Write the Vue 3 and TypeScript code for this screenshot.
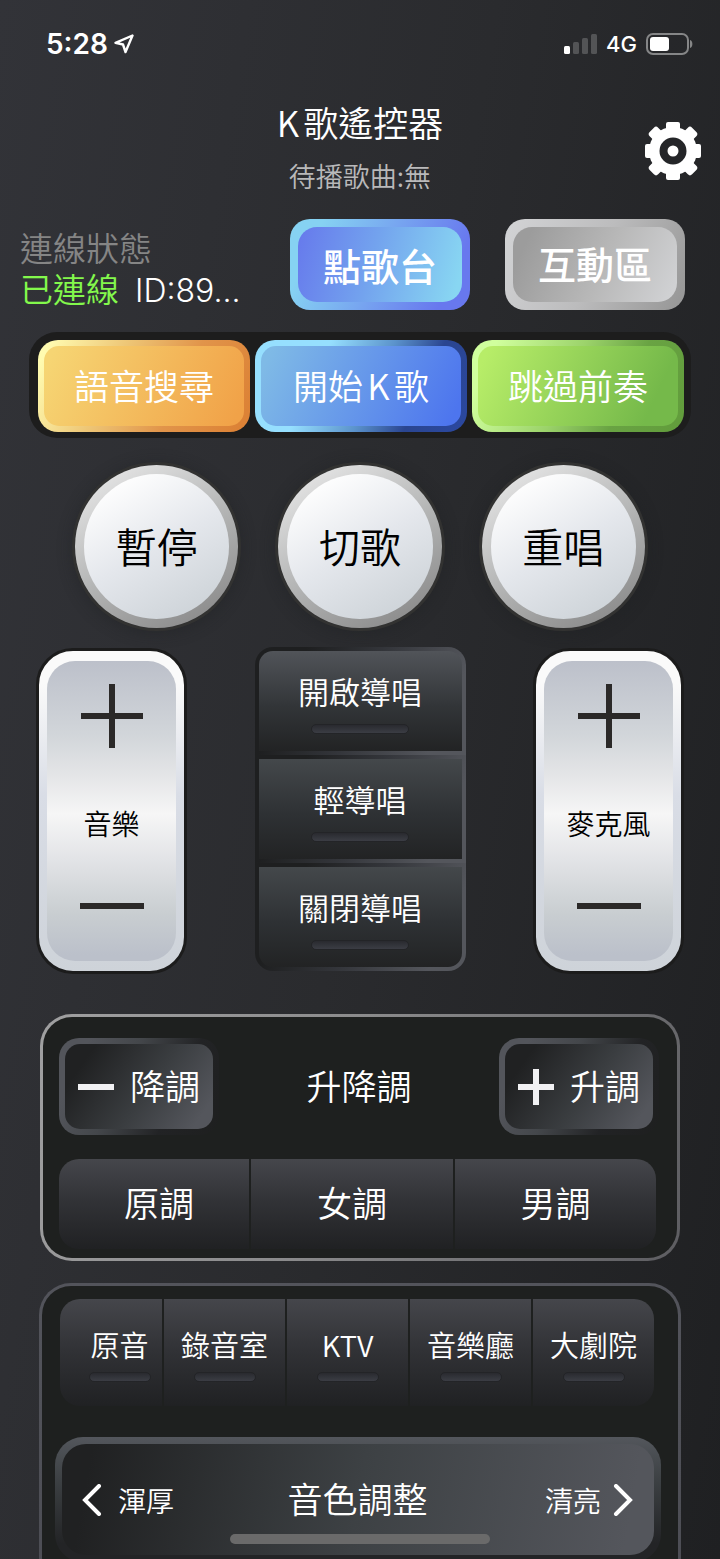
<script setup lang="ts">
import { ref } from 'vue'

interface Action {
  label: string
  tone: string
}

const searchActions: Action[] = [
  { label: '語音搜尋', tone: 'orange' },
  { label: '開始K歌', tone: 'blue' },
  { label: '跳過前奏', tone: 'green' },
]
const playback: string[] = ['暫停', '切歌', '重唱']
const guides: string[] = ['開啟導唱', '輕導唱', '關閉導唱']
const keys: string[] = ['原調', '女調', '男調']
const effects: string[] = ['原音', '錄音室', 'KTV', '音樂廳', '大劇院']

const connected = ref(true)
const roomId = ref('ID:89...')
</script>

<template>
  <div class="remote">
    <div class="statusbar">
      <div class="clock">
        <span>5:28</span>
        <svg width="20" height="20" viewBox="0 0 20 20" aria-hidden="true">
          <path d="M18.500 1.500 1.500 8.800 9 10.500 11.500 18Z" fill="none" stroke="#fff" stroke-width="2.400" stroke-linejoin="round" />
        </svg>
      </div>
      <div class="network">
        <svg width="33" height="20" viewBox="0 0 33 20" aria-hidden="true">
          <rect x="0" y="12" width="6" height="8" rx="1.500" fill="#fff" />
          <rect x="9" y="8" width="6" height="12" rx="1.500" fill="#535456" />
          <rect x="18" y="4" width="6" height="16" rx="1.500" fill="#535456" />
          <rect x="27" y="0" width="6" height="20" rx="1.500" fill="#535456" />
        </svg>
        <span>4G</span>
        <svg width="47" height="22" viewBox="0 0 47 22" aria-hidden="true">
          <rect x="1" y="1" width="41" height="20" rx="6" fill="none" stroke="#858687" stroke-width="2" />
          <rect x="4" y="4" width="19" height="14" rx="3" fill="#fff" />
          <path d="M44 7c3.200 1 3.200 7 0 8Z" fill="#858687" />
        </svg>
      </div>
    </div>

    <header class="header">
      <div class="titles">
        <h1>K歌遙控器</h1>
        <p>待播歌曲:無</p>
      </div>
      <button class="settings" type="button" aria-label="設定">
        <svg width="56" height="58" viewBox="-28 -29 56 58" aria-hidden="true">
          <g fill="#fff">
            <circle r="24" />
            <rect x="-7" y="-29" width="14" height="58" rx="2" />
            <rect x="-28" y="-7" width="56" height="14" rx="2" />
            <rect x="-6" y="-30" width="12" height="60" rx="3" transform="rotate(45)" />
            <rect x="-6" y="-30" width="12" height="60" rx="3" transform="rotate(-45)" />
          </g>
          <circle r="9.500" fill="none" stroke="#242528" stroke-width="8" />
        </svg>
      </button>
    </header>

    <section class="connection">
      <div class="state">
        <p class="state-label">連線狀態</p>
        <p class="state-value">
          <span class="online">{{ connected ? '已連線' : '未連線' }}</span>
          <span class="room">{{ roomId }}</span>
        </p>
      </div>
      <button class="bevel songs" type="button"><span class="face">點歌台</span></button>
      <button class="bevel interact" type="button"><span class="face">互動區</span></button>
    </section>

    <section class="actions">
      <button v-for="a in searchActions" :key="a.label" class="bevel action" :class="a.tone" type="button">
        <span class="face">{{ a.label }}</span>
      </button>
    </section>

    <section class="playback">
      <button v-for="p in playback" :key="p" class="round" type="button">
        <span class="face">{{ p }}</span>
      </button>
    </section>

    <section class="mixer">
      <div class="volume" role="group" aria-label="音樂">
        <div class="volume-face">
          <button type="button" aria-label="音樂 +">
            <svg width="66" height="66" viewBox="0 0 66 66"><path d="M2 33H64M33 1V65" stroke="#2b2928" stroke-width="6" /></svg>
          </button>
          <span>音樂</span>
          <button type="button" aria-label="音樂 −">
            <svg width="66" height="6" viewBox="0 0 66 6"><path d="M1 3H65" stroke="#2b2928" stroke-width="6" /></svg>
          </button>
        </div>
      </div>
      <div class="guides">
        <button v-for="g in guides" :key="g" class="guide" type="button">
          <span class="guide-face">
            <span>{{ g }}</span>
            <i class="lamp wide"></i>
          </span>
        </button>
      </div>
      <div class="volume" role="group" aria-label="麥克風">
        <div class="volume-face">
          <button type="button" aria-label="麥克風 +">
            <svg width="66" height="66" viewBox="0 0 66 66"><path d="M2 33H64M33 1V65" stroke="#2b2928" stroke-width="6" /></svg>
          </button>
          <span>麥克風</span>
          <button type="button" aria-label="麥克風 −">
            <svg width="66" height="6" viewBox="0 0 66 6"><path d="M1 3H65" stroke="#2b2928" stroke-width="6" /></svg>
          </button>
        </div>
      </div>
    </section>

    <section class="panel pitch">
      <div class="pitch-row">
        <button class="bevel step" type="button">
          <span class="face">
            <svg width="36" height="36" viewBox="0 0 36 36" aria-hidden="true"><path d="M0 18H36" stroke="#f1f1f3" stroke-width="6" /></svg>
            <span class="caption">降調</span>
          </span>
        </button>
        <h2 class="caption">升降調</h2>
        <button class="bevel step" type="button">
          <span class="face">
            <svg width="36" height="36" viewBox="0 0 36 36" aria-hidden="true"><path d="M0 18H36M18 0V36" stroke="#f1f1f3" stroke-width="6" /></svg>
            <span class="caption">升調</span>
          </span>
        </button>
      </div>
      <div class="segments keys">
        <button v-for="k in keys" :key="k" type="button"><span class="caption">{{ k }}</span></button>
      </div>
    </section>

    <section class="panel tone">
      <div class="segments effects">
        <button v-for="e in effects" :key="e" type="button">
          <span>{{ e }}</span>
          <i class="lamp"></i>
        </button>
      </div>
      <div class="timbre">
        <div class="timbre-face">
          <button type="button">
            <svg width="20" height="32" viewBox="0 0 20 32" aria-hidden="true"><path d="M17 2 3 16 17 30" fill="none" stroke="#fff" stroke-width="4" stroke-linecap="round" /></svg>
            渾厚
          </button>
          <h2 class="caption">音色調整</h2>
          <button type="button" class="next">
            清亮
            <svg width="20" height="32" viewBox="0 0 20 32" aria-hidden="true"><path d="M3 2 17 16 3 30" fill="none" stroke="#fff" stroke-width="4" stroke-linecap="round" /></svg>
          </button>
        </div>
      </div>
    </section>

    <div class="home-indicator"></div>
  </div>
</template>

<style>
body {
  margin: 0;
  background: #28292c;
}
</style>

<style scoped>
.remote {
  box-sizing: border-box;
  height: 100vh;
  overflow-y: auto;
  scrollbar-width: none;
  display: flex;
  flex-direction: column;
  background: linear-gradient(100deg, #323338 0%, #2a2b2e 50%, #1f2022 100%);
  color: #fff;
  font-family: "Noto Sans CJK TC", "Noto Sans", sans-serif;
  font-weight: 350;
  text-autospace: normal;
}

.remote > * {
  flex-shrink: 0;
}

h1,
h2,
p {
  margin: 0;
  font-weight: inherit;
}

svg {
  display: block;
  flex-shrink: 0;
}

button {
  box-sizing: border-box;
  margin: 0;
  padding: 0;
  border: 0;
  background: none;
  color: inherit;
  font: inherit;
  white-space: nowrap;
  cursor: pointer;
}

.statusbar {
  display: flex;
  justify-content: space-between;
  align-items: center;
  height: 88px;
  padding: 0 27px 0 46px;
  font-family: Inter, sans-serif;
}

.clock,
.network {
  display: flex;
  align-items: center;
}

.clock {
  gap: 6px;
  font-size: 28px;
  font-weight: 600;
}

.network {
  gap: 9px;
  font-size: 22px;
  font-weight: 500;
}

.header {
  display: grid;
  grid-template-columns: 1fr auto 1fr;
  align-items: center;
  padding: 10px 19px 0;
}

.titles {
  grid-column: 2;
  text-align: center;
}

.titles h1 {
  font-size: 35px;
  line-height: 48px;
}

.titles p {
  margin-top: 10px;
  font-size: 27px;
  line-height: 40px;
  color: #b9b9ba;
}

.settings {
  justify-self: end;
  padding-top: 8px;
}

.connection {
  display: grid;
  grid-template-columns: 47fr 36fr 36fr;
  gap: 35px;
  margin-top: 23px;
  padding: 0 35px 0 20px;
}

.state {
  display: flex;
  flex-direction: column;
  gap: 2px;
  padding-top: 9px;
  font-size: 33px;
  line-height: 39px;
  white-space: nowrap;
}

.state-label {
  color: #858585;
}

.state-value {
  display: flex;
  align-items: baseline;
  gap: 16px;
}

.online {
  color: #83f84c;
}

.room {
  font-family: Inter, sans-serif;
  font-size: 32px;
}

.bevel {
  display: flex;
  height: 91px;
  padding: 8px;
  border-radius: 20px;
}

.face {
  box-sizing: border-box;
  display: flex;
  flex: 1;
  align-items: center;
  justify-content: center;
  height: 100%;
  padding-bottom: 4px;
  border-radius: 19px;
}

.caption {
  padding-bottom: 5px;
}

.songs,
.interact {
  font-size: 38px;
  font-weight: 500;
}

.songs {
  background: linear-gradient(115deg, #86d2f2 0%, #86d2f2 15%, #6878ee 85%);
}

.songs .face {
  padding-bottom: 0;
  background: linear-gradient(105deg, #6679ec 0%, #73a3ee 45%, #88d6f2 95%);
}

.interact {
  background: linear-gradient(115deg, #d3d4d6 0%, #bcbcbd 50%, #999 95%);
}

.interact .face {
  background: linear-gradient(115deg, #9c9c9c 10%, #b8b8b8 55%, #d0d1d3 95%);
}

.actions {
  display: grid;
  grid-template-columns: repeat(3, 1fr);
  gap: 5px;
  margin: 22px 29px 0;
  padding: 8px 7px 6px 9px;
  border-radius: 28px;
  background: #1d1d1d;
}

.action {
  height: 92px;
  padding: 6px;
  font-size: 35px;
}

.action .face {
  border-radius: 15px;
}

.orange {
  background: linear-gradient(115deg, #fffbb0 5%, #eec777 35%, #e1944a 65%, #dc8236 95%);
}

.orange .face {
  background: linear-gradient(115deg, #f6d573 5%, #f1a248 95%);
}

.blue {
  background: linear-gradient(115deg, #96dffe 30%, #5c94cc 55%, #2a4590 75%, #2b48a0 100%);
}

.blue .face {
  background: linear-gradient(115deg, #7fbae6 5%, #4d75ee 95%);
}

.green {
  background: linear-gradient(115deg, #d0ff9d 10%, #9cd36b 45%, #69a343 70%, #619c3b 100%);
}

.green .face {
  background: linear-gradient(115deg, #b7ed68 5%, #75b94a 85%);
}

.playback {
  display: grid;
  grid-template-columns: repeat(3, 1fr);
  gap: 40px;
  margin-top: 27px;
  padding: 0 75px;
}

.round {
  aspect-ratio: 1;
  padding: 9px;
  border-radius: 50%;
  background: linear-gradient(150deg, #e9e9e9 5%, #b5b6b6 50%, #868686 95%);
  box-shadow: 0 0 0 3px #323231, 0 2px 14px 4px #1f202266;
  color: #000;
  font-size: 41px;
}

.round .face {
  border-radius: 50%;
  background: linear-gradient(150deg, #fefefe 12%, #e4e7ec 50%, #ccd2d7 92%);
}

.mixer {
  display: flex;
  justify-content: space-between;
  margin-top: 20px;
  padding: 0 36px;
}

.volume {
  width: 129px;
  padding: 10px 8px;
  border: 3px solid #1c1c1c;
  border-radius: 37px;
  background: linear-gradient(#fafafa 10%, #d9dde6 45%, #ced3d9 100%);
}

.volume-face {
  display: flex;
  flex-direction: column;
  height: 300px;
  border-radius: 28px;
  background: linear-gradient(#bcc0ca 0%, #d2d6da 25%, #e4e5e7 38%, #f6f6f6 51%, #e4e5e8 65%, #c9ced1 84%, #bbc0ca 98%);
  color: #000;
  font-size: 28px;
}

.volume-face button {
  display: grid;
  place-items: center;
  height: 110px;
}

.volume-face span {
  box-sizing: border-box;
  flex: 1;
  padding-top: 38px;
  line-height: 28px;
  text-align: center;
}

.guides {
  width: 211px;
  margin-top: -1px;
  align-self: flex-start;
  border-radius: 18px;
  overflow: hidden;
}

.guide {
  display: block;
  width: 100%;
  height: 108px;
  padding: 4px;
  background: linear-gradient(115deg, #1e1f20 20%, #33353a 50%, #54565c 85%);
  font-size: 31px;
}

.guide-face {
  display: flex;
  flex-direction: column;
  align-items: center;
  gap: 11px;
  height: 82px;
  padding-top: 18px;
  background: linear-gradient(#44484b, #2e3134 55%, #222324);
  line-height: 44px;
}

.guide:first-child .guide-face {
  border-radius: 14px 14px 0 0;
  background: linear-gradient(#515459, #323538 55%, #222324);
}

.guide:last-child .guide-face {
  border-radius: 0 0 14px 14px;
}

.lamp {
  box-sizing: border-box;
  width: 62px;
  height: 10px;
  border: 1px solid #232427;
  border-radius: 5px;
  background: linear-gradient(#292a2f, #3b3d44);
}

.lamp.wide {
  width: 98px;
}

.panel {
  border: 3px solid transparent;
  border-radius: 32px;
}

.pitch {
  margin: 40px 40px 0;
  padding: 21px 18px 9px 16px;
  background: linear-gradient(#1e201f, #1e201f) padding-box, linear-gradient(110deg, #a0a0a1, #8b8b8c 45%, #5d5d61) border-box;
}

.pitch h2,
.timbre h2,
.keys,
.step {
  font-size: 35px;
}

.pitch-row {
  display: grid;
  grid-template-columns: 160px 1fr 160px;
  align-items: center;
  text-align: center;
}

.step {
  height: 97px;
  padding: 6px;
  background: linear-gradient(115deg, #53555b 15%, #44474b 40%, #222325 70%, #1e1f1f 100%);
}

.step .face {
  gap: 16px;
  padding-bottom: 0;
  border-radius: 15px;
  background: linear-gradient(125deg, #202122 15%, #3a3d40 55%, #54565c 90%);
}

.segments {
  display: grid;
  gap: 2px;
  border-radius: 20px;
  overflow: hidden;
}

.segments button {
  background: linear-gradient(#45464b, #323337 45%, #202123);
}

.keys {
  grid-template-columns: 190fr 202fr 201fr;
  height: 90px;
  margin: 24px 3px 0 0;
}

.keys button {
  display: flex;
  align-items: center;
  justify-content: center;
}

.keys button:first-child {
  padding-left: 10px;
}

.tone {
  margin: 22px 39px 0;
  padding: 13px 17px 24px 13px;
  background: linear-gradient(#1e201f, #1e201f) padding-box, linear-gradient(#53545b, #4c4d54) border-box;
}

.effects {
  grid-template-columns: 102fr 121fr 121fr 121fr 121fr;
  height: 107px;
  margin: 0 7px 0 5px;
  font-size: 29px;
}

.effects button {
  display: flex;
  flex-direction: column;
  align-items: center;
  gap: 8px;
  padding-top: 25px;
  line-height: 40px;
}

.effects button:first-child {
  padding-left: 17px;
}

.timbre {
  margin-top: 31px;
  padding: 7px;
  border-radius: 28px;
  background: linear-gradient(#53565c, #3c4043 35%, #232426 85%);
}

.timbre-face {
  display: grid;
  grid-template-columns: 1fr auto 1fr;
  align-items: center;
  height: 111px;
  padding: 0 21px 0 20px;
  border-radius: 24px;
  background: linear-gradient(100deg, #202122 5%, #3d4144 50%, #54565c 95%);
}

.timbre button {
  display: flex;
  align-items: center;
  gap: 16px;
  font-size: 28px;
}

.timbre .next {
  justify-self: end;
  gap: 12px;
}

.home-indicator {
  position: fixed;
  bottom: 15px;
  left: 32%;
  right: 32%;
  height: 10px;
  border-radius: 5px;
  background: #6a6a6a;
}
</style>
